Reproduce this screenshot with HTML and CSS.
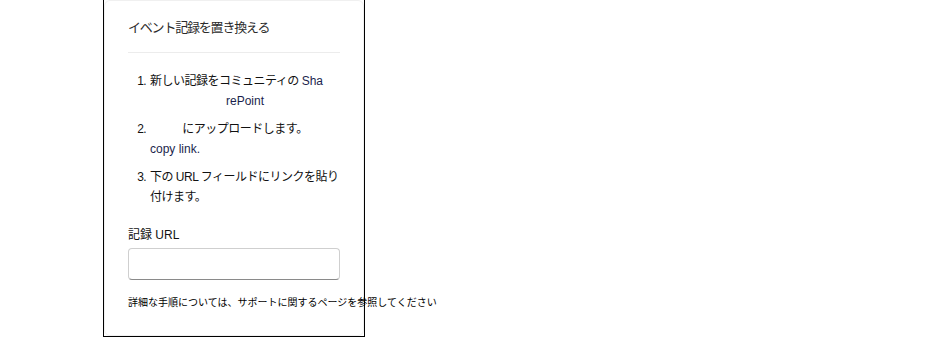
FILE: index.html
```html
<!DOCTYPE html>
<html lang="ja">
<head>
  <meta charset="UTF-8">
  <meta name="viewport" content="width=device-width, initial-scale=1.0">
  <title>イベント記録を置き換える</title>
  <link rel="stylesheet" href="styles.css">
</head>
<body>

  <div class="frame">
    <div class="card">
      <div class="card-title">イベント記録を置き換える</div>

      <!-- Steps -->
      <ol class="steps">
        <li>新しい記録をコミュニティの <span class="link">Sha</span><span class="link step-center">rePoint</span></li>
        <li>
          <div class="step-center">にアップロードします。</div>
          <div class="link copy-link">copy link.</div>
        </li>
        <li>下の URL フィールドにリンクを貼り付けます。</li>
      </ol>

      <label class="field-label" for="recordUrl">記録 URL</label>
      <input class="field-input" id="recordUrl" type="text">

      <p class="help-text">詳細な手順については、サポートに関するページを参照してください</p>
    </div>
  </div>

</body>
</html>
```

FILE: styles.css
```css
body {
  margin: 0;
  font-family: "Liberation Sans", "Noto Sans CJK JP", sans-serif;
  color: #111;
  background: #fff;
}

/* Outer black frame */
.frame {
  margin: -1px 0 0 103px;
  width: 260px;
  height: 336px;
  border: 1px solid #000;
}

.card {
  box-sizing: border-box;
  height: 336px;
  padding: 17px 23px 0;
  border: 1px solid #f0f0f0;
  border-radius: 6px;
  background: #fff;
}

.card-title {
  font-size: 13px;
  line-height: 20px;
  letter-spacing: -1.2px;
  color: #2b2b2b;
  padding-bottom: 14px;
  border-bottom: 1px solid #ececec;
}

.steps {
  margin: 18px 0 0;
  padding-left: 21px;
  font-size: 12px;
  line-height: 20px;
  letter-spacing: -0.5px;
}

.steps li {
  margin-bottom: 8px;
  padding-left: 1px;
}

.steps li:last-child {
  margin-bottom: 0;
}

.step-center {
  display: block;
  text-align: center;
}

.link {
  color: #1b1f4d;
  letter-spacing: 0;
}

.copy-link {
  font-size: 12px;
  text-align: left;
}

.field-label {
  display: block;
  margin-top: 18px;
  margin-bottom: 3px;
  font-size: 12px;
  line-height: 20px;
  color: #111;
}

.field-input {
  box-sizing: border-box;
  display: block;
  width: 100%;
  height: 32px;
  margin: 0;
  padding: 0 8px;
  border: 1px solid #cfcfcf;
  border-bottom-color: #8a8a8a;
  border-radius: 4px;
  background: #fff;
  font-size: 12px;
}

.help-text {
  margin: 14px 0 0;
  font-size: 10px;
  line-height: 18px;
  white-space: nowrap;
  color: #000;
}
```
